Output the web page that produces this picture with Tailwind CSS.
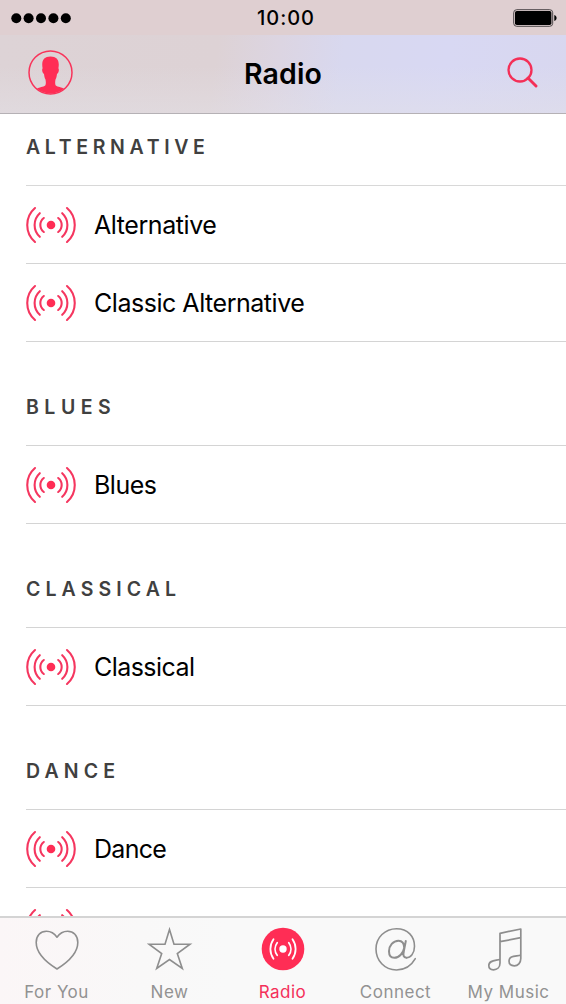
<!DOCTYPE html>
<html lang="en">
<head>
<meta charset="utf-8">
<title>Radio</title>
<script src="https://cdn.jsdelivr.net/npm/@tailwindcss/browser@4"></script>
</head>
<body class="bg-white">
<svg class="hidden">
  <symbol id="waves" viewBox="-26 -19 52 38">
    <circle r="4.3" fill="#ff2d55"/>
    <g fill="none" stroke="currentColor" stroke-width="2.1" stroke-linecap="round">
      <path d="M-16-17A22.5 22.5 0 0 0-16 17M-11.2-11.8A16 16 0 0 0-11.2 11.8M-7.2-7A8.8 8.8 0 0 0-7.2 7"/>
      <path d="M16-17A22.5 22.5 0 0 1 16 17M11.2-11.8A16 16 0 0 1 11.2 11.8M7.2-7A8.8 8.8 0 0 1 7.2 7"/>
    </g>
  </symbol>
</svg>
<div class="flex h-[1004px] w-[566px] flex-col overflow-hidden bg-white font-['Inter',sans-serif] text-black">
  <header class="h-[114px] shrink-0 border-b border-[#b5b1b5] bg-[#dfd3d5]">
    <div class="grid h-[35px] grid-cols-3 items-center bg-[#dfcfd1] pr-[9px] pl-[11px]">
      <svg width="61" height="12" viewBox="0 0 61 12"><circle cx="5.3" cy="6.3" r="5"/><circle cx="17.6" cy="6.3" r="5"/><circle cx="30" cy="6.3" r="5"/><circle cx="42.4" cy="6.3" r="5"/><circle cx="54.8" cy="6.3" r="5"/></svg>
      <span class="pt-px pl-[4px] text-center text-[20px] leading-[34px] font-medium tracking-[1px]">10:00</span>
      <svg class="justify-self-end" width="44" height="18" viewBox="0 0 44 18"><rect x=".7" y=".7" width="39" height="16.6" rx="3" fill="none" stroke="#4c4648" stroke-width="1"/><rect x="2" y="2" width="36.4" height="14" rx="1.8"/><path d="M41.3 6c3 .8 3 5.2 0 6z"/></svg>
    </div>
    <div class="grid h-[78px] grid-cols-3 items-center bg-[linear-gradient(180deg,transparent_40%,rgba(228,226,232,0.45)_100%),linear-gradient(97deg,#ddd3d6_0%,#ddd2d5_38%,#dcd5e2_49%,#d8d8ef_60%,#d8d8f3_78%,#d8d7ef_100%)] px-7">
      <svg class="-mt-1" width="45" height="45" viewBox="0 0 45 45"><circle cx="22.5" cy="22.5" r="21.5" fill="none" stroke="#f8345a" stroke-width="1.5"/><path fill="#ff2d55" d="M9 38.700c2-1.600 6.500-1.600 8.200-3.200.9-.8.700-4.500.300-6-1-1.500-1.200-3.200-1.500-5.500-1.900-1.300-2.300-4.700-1.400-5.800C13.200 10.500 15.800 6.500 22.500 6.500s9.300 4 7.900 11.700c.9 1.100.5 4.500-1.400 5.800-.3 2.300-.5 4-1.500 5.500-.4 1.500-.6 5.200.3 6 1.700 1.600 6.200 1.600 8.200 3.200a21.500 21.500 0 0 1-27 0z"/></svg>
      <h1 class="pt-px text-center text-[28.500px] font-semibold tracking-[0.150px]">Radio</h1>
      <svg class="-mt-[3px] justify-self-end" width="31" height="32" viewBox="0 0 31 32" fill="none" stroke="#f42f57" stroke-width="2.300"><circle cx="13" cy="13" r="11.500"/><path d="M21 21l8 8" stroke-width="2.900" stroke-linecap="round"/></svg>
    </div>
  </header>
  <main class="min-h-0 flex-1 overflow-hidden pl-[26px]">
    <h2 class="h-[72px] border-b border-[#d8d8d8] pt-[19px] text-[19.500px] leading-[28px] font-semibold tracking-[4.650px] text-[#404040]">ALTERNATIVE</h2>
    <div class="flex h-[78px] items-center border-b border-[#d4d4d4] text-[#f5365f]"><svg width="52" height="38" class="-ml-px"><use href="#waves"/></svg><span class="ml-[17px] pt-[3px] text-[25px] tracking-[-0.430px] text-black">Alternative</span></div>
    <div class="flex h-[78px] items-center border-b border-[#d4d4d4] text-[#f5365f]"><svg width="52" height="38" class="-ml-px"><use href="#waves"/></svg><span class="ml-[17px] pt-[3px] text-[25px] tracking-[-0.470px] text-black">Classic Alternative</span></div>
    <h2 class="h-[104px] border-b border-[#d4d4d4] pt-[51px] text-[19.500px] leading-[28px] font-semibold tracking-[5.500px] text-[#404040]">BLUES</h2>
    <div class="flex h-[78px] items-center border-b border-[#d4d4d4] text-[#f5365f]"><svg width="52" height="38" class="-ml-px"><use href="#waves"/></svg><span class="ml-[17px] pt-[3px] text-[25px] tracking-[-0.500px] text-black">Blues</span></div>
    <h2 class="h-[104px] border-b border-[#d4d4d4] pt-[51px] text-[19.500px] leading-[28px] font-semibold tracking-[5.100px] text-[#404040]">CLASSICAL</h2>
    <div class="flex h-[78px] items-center border-b border-[#d4d4d4] text-[#f5365f]"><svg width="52" height="38" class="-ml-px"><use href="#waves"/></svg><span class="ml-[17px] pt-[3px] text-[25px] tracking-[-0.550px] text-black">Classical</span></div>
    <h2 class="h-[104px] border-b border-[#d4d4d4] pt-[51px] text-[19.500px] leading-[28px] font-semibold tracking-[5.150px] text-[#404040]">DANCE</h2>
    <div class="flex h-[78px] items-center border-b border-[#d4d4d4] text-[#f5365f]"><svg width="52" height="38" class="-ml-px"><use href="#waves"/></svg><span class="ml-[17px] pt-[3px] text-[25px] tracking-[-0.700px] text-black">Dance</span></div>
    <div class="flex h-[78px] items-center text-[#f5365f]"><svg width="52" height="38" class="-ml-px"><use href="#waves"/></svg></div>
  </main>
  <nav class="grid h-[88px] shrink-0 grid-cols-5 border-t-2 border-[#d4d4d4] bg-[linear-gradient(90deg,#fbf6f7,#f9f8f8_25%,#f9f9f9_40%)] pr-px text-center text-[17px] leading-[22px] tracking-[0.500px] whitespace-nowrap text-[#929292]">
    <div class="flex flex-col items-center pt-[9px]"><svg width="46" height="46" viewBox="0 0 46 46" fill="none" stroke="#8e8e8e" stroke-width="1.600"><path d="M23 42C15 37 2.200 27 2.200 15.500 2.200 8.500 6.500 4.200 12.400 4.200c4.600 0 8.100 2.300 10.600 6 2.500-3.700 6-6 10.600-6 5.900 0 10.200 4.300 10.200 11.300C43.800 27 31 37 23 42z" stroke-linejoin="round"/></svg><span class="mt-[8px]">For You</span></div>
    <div class="flex flex-col items-center pt-[9px]"><svg width="46" height="46" viewBox="0 0 46 46" fill="none" stroke="#8e8e8e" stroke-width="1.600"><path d="M22.500 2.500l4.500 14.700h16L30.300 26.500l5 15L22.500 32.500 9.700 41.500l5-15L2 17.200h16z"/></svg><span class="mt-[8px]">New</span></div>
    <div class="flex flex-col items-center pt-[9px] text-[#f4305a]"><svg width="46" height="46" viewBox="0 0 46 46"><circle cx="23" cy="22" r="21.300" fill="#ff2d55"/><circle cx="23" cy="22" r="3.700" fill="#fff"/><path d="M13.500 12.200A17 17 0 0 0 13.500 31.800M17.200 15.700A10.500 10.500 0 0 0 17.200 28.300M32.500 12.200A17 17 0 0 1 32.500 31.800M28.800 15.700A10.500 10.500 0 0 1 28.800 28.300" fill="none" stroke="#fff" stroke-width="1.800" stroke-linecap="round"/></svg><span class="mt-[8px]">Radio</span></div>
    <div class="flex flex-col items-center pt-[9px]"><svg width="46" height="46" viewBox="0 0 46 46" fill="none" stroke="#8e8e8e" stroke-width="1.600" stroke-linecap="round"><path d="M42.300 31.700C38.500 38.500 32 43 23.500 43 11.500 43 3 33.500 3 22S12 1.700 23.500 1.700s18 8 18 17.500c0 7.500-4 11.500-8 11.500"/><path d="M33.500 30.700c-3.200 0-3.600-2.600-2.700-6.300L32.800 14M31.200 21c0-4.500-2-7.300-5.700-7.300-5.400 0-9.500 5.100-9.500 10.600 0 4 2.100 6.500 5.300 6.500 5 0 8.900-4.800 9.900-9.800z" stroke-width="2"/></svg><span class="mt-[8px]">Connect</span></div>
    <div class="flex flex-col items-center pt-[9px]"><svg width="46" height="46" viewBox="0 0 46 46" fill="none" stroke="#8e8e8e" stroke-width="1.700" stroke-linejoin="round"><path d="M14 36V6.300L34.800 2V31.500c0 4.500-3 7.300-6.500 7.300-3.400 0-5.300-2-5.300-4.700 0-6 8-4.600 11.800-6.100M14 14.700l20.800-4M14 32.300c-3.300 1.500-11.200.5-11.200 6.300 0 2.700 2 4.200 4.700 4.200 3.700 0 6.500-2.500 6.500-6.800"/></svg><span class="mt-[8px]">My Music</span></div>
  </nav>
</div>
</body>
</html>
